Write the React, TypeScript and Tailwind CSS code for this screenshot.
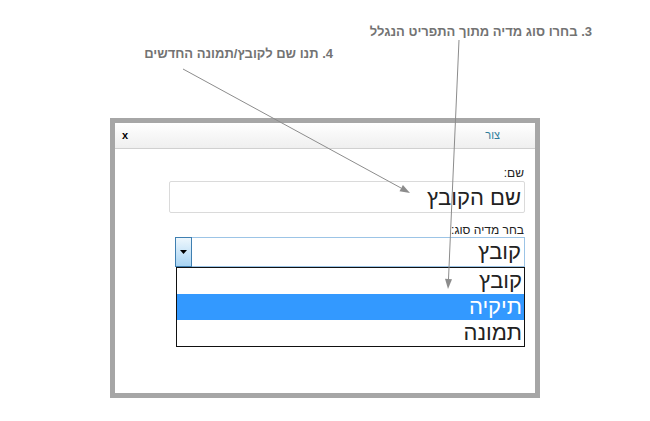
import { useState } from 'react';

const OPTIONS = ['קובץ', 'תיקיה', 'תמונה'];

function Callouts() {
  return (
    <svg
      className="pointer-events-none absolute inset-0"
      width={650}
      height={421}
      viewBox="0 0 650 421"
      aria-hidden="true"
    >
      <line x1={183} y1={69} x2={401} y2={188} stroke="#8c8c8c" strokeWidth={1} />
      <polygon points="410,193 399.5,191.3 402.9,185.1" fill="#8c8c8c" />
      <line x1={459} y1={40} x2={448.5} y2={279} stroke="#8c8c8c" strokeWidth={1} />
      <polygon points="448,289 445,278.8 452,279.2" fill="#8c8c8c" />
    </svg>
  );
}

export default function App() {
  const [selected, setSelected] = useState(1);
  const [name, setName] = useState('שם הקובץ');

  return (
    <div className="relative h-[421px] w-[650px] overflow-hidden bg-white font-['Liberation_Sans',Arial,sans-serif] text-[#222]">
      <div className="flex h-[118px] flex-col pt-[24px] text-[13px] font-bold leading-[16px] text-[#737373]">
        <p dir="rtl" className="pr-[58px] text-right">3. בחרו סוג מדיה מתוך התפריט הנגלל</p>
        <p dir="rtl" className="mt-[6px] pr-[317px] text-right">4. תנו שם לקובץ/תמונה החדשים</p>
      </div>

      <div className="ml-[110px] flex h-[280px] w-[430px] flex-col border-[5px] border-[#a6a6a6] bg-white">
        <div className="flex h-[26px] items-center justify-between border-b border-[#d0d0d0] bg-gradient-to-b from-white to-[#efefef] pl-[7px] pr-[35px]">
          <span className="text-[11px] font-bold leading-none text-black">x</span>
          <span className="text-[11px] leading-none text-[#2f7d9c]">צור</span>
        </div>

        <div dir="rtl" className="flex flex-col items-start pr-[10px] pt-[17px]">
          <label className="h-[14px] pr-[1px] text-[12px] leading-[14px]">שם:</label>
          <input
            value={name}
            onChange={(e) => setName(e.target.value)}
            className="mt-[1px] h-[32px] w-[356px] rounded-[2px] border border-[#dadada] bg-white pr-[3px] text-[22px] text-[#222] outline-none"
          />

          <label className="mt-[10px] h-[14px] pr-[1px] text-[12px] leading-[14px]">בחר מדיה סוג:</label>
          <div className="flex w-[350px] flex-col">
            <div dir="ltr" className="flex h-[30px] border border-[#9cc4e6]">
              <button
                type="button"
                className="-m-px flex h-[30px] w-[17px] shrink-0 items-center justify-center border border-[#3f7fb1] bg-gradient-to-b from-[#eef7fd] to-[#a8d4f3]"
              >
                <svg width="7" height="4" viewBox="0 0 7 4">
                  <polygon points="0,0 7,0 3.5,4" fill="#000" />
                </svg>
              </button>
              <div dir="rtl" className="flex-1 pr-[3px] text-[22px] leading-[28px]">
                {OPTIONS[0]}
              </div>
            </div>
            <ul className="ml-[1px] border border-[#111] bg-white">
              {OPTIONS.map((opt, i) => (
                <li
                  key={opt}
                  onMouseEnter={() => setSelected(i)}
                  className={
                    i === selected
                      ? 'h-[26px] bg-[#3399ff] pr-[2px] text-[22px] leading-[26px] text-white'
                      : 'h-[26px] pr-[2px] text-[22px] leading-[26px] text-[#222]'
                  }
                >
                  {opt}
                </li>
              ))}
            </ul>
          </div>
        </div>
      </div>

      <Callouts />
    </div>
  );
}
